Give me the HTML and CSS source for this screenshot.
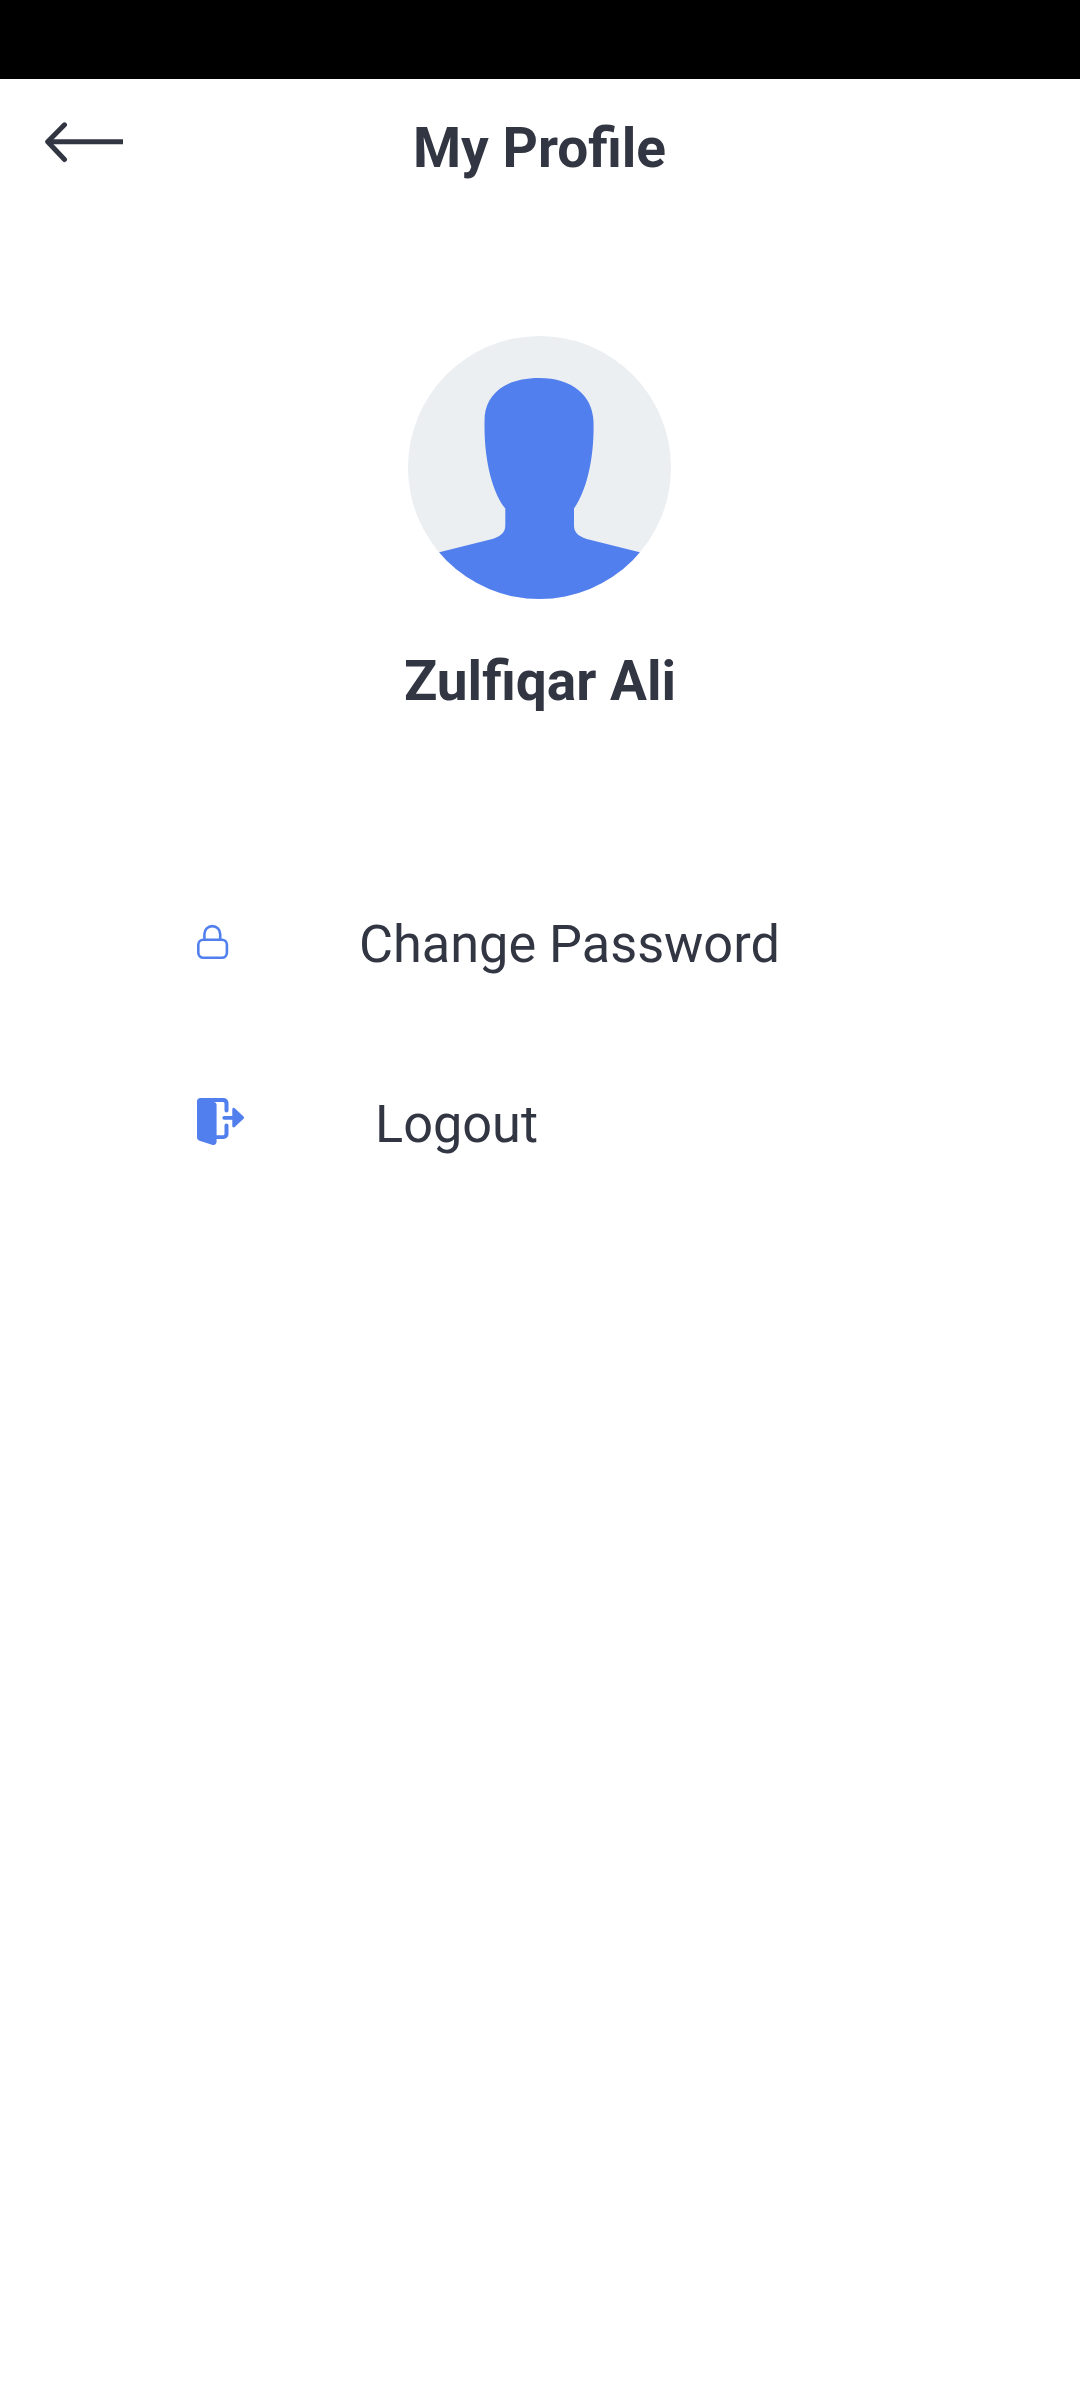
FILE: index.html
```html
<!DOCTYPE html>
<html lang="en">
<head>
<meta charset="utf-8">
<title>My Profile</title>
<link rel="stylesheet" href="styles.css">
</head>
<body>
<div class="status-bar"></div>
<header class="header">
  <svg class="back" width="80" height="42" viewBox="0 0 80 42" fill="none" stroke="currentColor" stroke-linecap="round">
    <path d="M19.500 3.800 2.700 20.700 19.500 38.500" stroke-width="5" stroke-linejoin="round"/>
    <path d="M4 20.800H78" stroke-width="5" stroke-linecap="butt"/>
  </svg>
  <h1 class="title">My Profile</h1>
</header>
<main>
  <section class="profile">
    <svg class="avatar" width="263" height="263" viewBox="0 0 263 263">
      <defs><clipPath id="disc"><circle cx="131.5" cy="131.5" r="131.5"/></clipPath></defs>
      <circle class="disc" cx="131.5" cy="131.5" r="131.5"/>
      <path class="person" clip-path="url(#disc)" d="M131 42C165 42 184.500 60 185.500 85C186.500 121 179 154 166 172.500V189C166 196 169 199.500 178.700 203L231.700 216.300L263 263H0L31.300 216.300L85.300 202.700C94 199.500 97.300 196 97.300 189V172.500C84 156 75 121 76.700 80C79 58 97 42 131 42Z"/>
    </svg>
    <h2 class="name">Zulfiqar Ali</h2>
  </section>
  <nav class="menu">
    <a class="item">
      <svg class="icon lock" width="32" height="36" viewBox="0 0 32 36" fill="none" stroke="currentColor" stroke-width="2.6">
        <rect x="1.300" y="15.800" width="28.600" height="18" rx="5"/>
        <path d="M7.400 15.500V10a7.900 7.900 0 0 1 15.800 0V15.500"/>
      </svg>
      <span class="label">Change Password</span>
    </a>
    <a class="item item-logout">
      <svg class="icon exit" width="48" height="48" viewBox="0 0 48 48" fill="currentColor">
        <path d="M3.500 0H26.500a5 5 0 0 1 5 5V12.500a2 2 0 0 1-4 0V5.500a1.500 1.500 0 0 0-1.500-1.500H17c2 .7 2.600 1.500 2.600 3V37.300H26a1.500 1.500 0 0 0 1.500-1.500V27.500a2 2 0 0 1 4 0V36a5 5 0 0 1-5 5H19.600V43.500c0 2.700-2 4-4.600 3.200L2.500 42.700C.8 42 0 41 0 39.300V3.500C0 1.300 1.300 0 3.500 0Z"/>
        <path d="M27.200 17.900H35.300V11.500c0-1.800 1.500-2.200 2.700-1L46.500 18.500c.8.800.8 1.500 0 2.300L38 28.700c-1.200 1.200-2.700.8-2.700-1V21.700H27.200a1.900 1.900 0 0 1 0-3.800Z"/>
      </svg>
      <span class="label">Logout</span>
    </a>
  </nav>
</main>
</body>
</html>
```
FILE: styles.css
```css
body {
  margin: 0;
  min-height: 2400px;
  background: #fff;
  color: #323643;
  font-family: Roboto, "Liberation Sans", sans-serif;
}
.status-bar {
  height: 79px;
  background: #000;
}
.header {
  display: grid;
  grid-template-columns: 125px 1fr 126px;
  padding-top: 37px;
  height: 64px;
}
.back {
  display: block;
  margin: 5px 0 0 45px;
}
.title,
.name {
  margin: 0;
  font-size: 55px;
  line-height: 64px;
  font-weight: 700;
  text-align: center;
}
.profile {
  display: flex;
  flex-direction: column;
  align-items: center;
  gap: 50px;
  padding-top: 156px;
}
.avatar {
  display: block;
  margin-right: 1px;
}
.disc {
  fill: #ebeff2;
}
.person {
  fill: #527fee;
}
.menu {
  display: flex;
  flex-direction: column;
  gap: 119px;
  padding: 201px 0 0 197px;
}
.item {
  display: grid;
  grid-template-columns: 162px 1fr;
  height: 61px;
}
.item-logout {
  grid-template-columns: 178px 1fr;
}
.icon {
  color: #527fee;
}
.lock {
  margin-top: 10px;
}
.exit {
  margin-top: 4px;
}
.label {
  font-size: 52.25px;
  line-height: 61px;
  white-space: nowrap;
}
```
